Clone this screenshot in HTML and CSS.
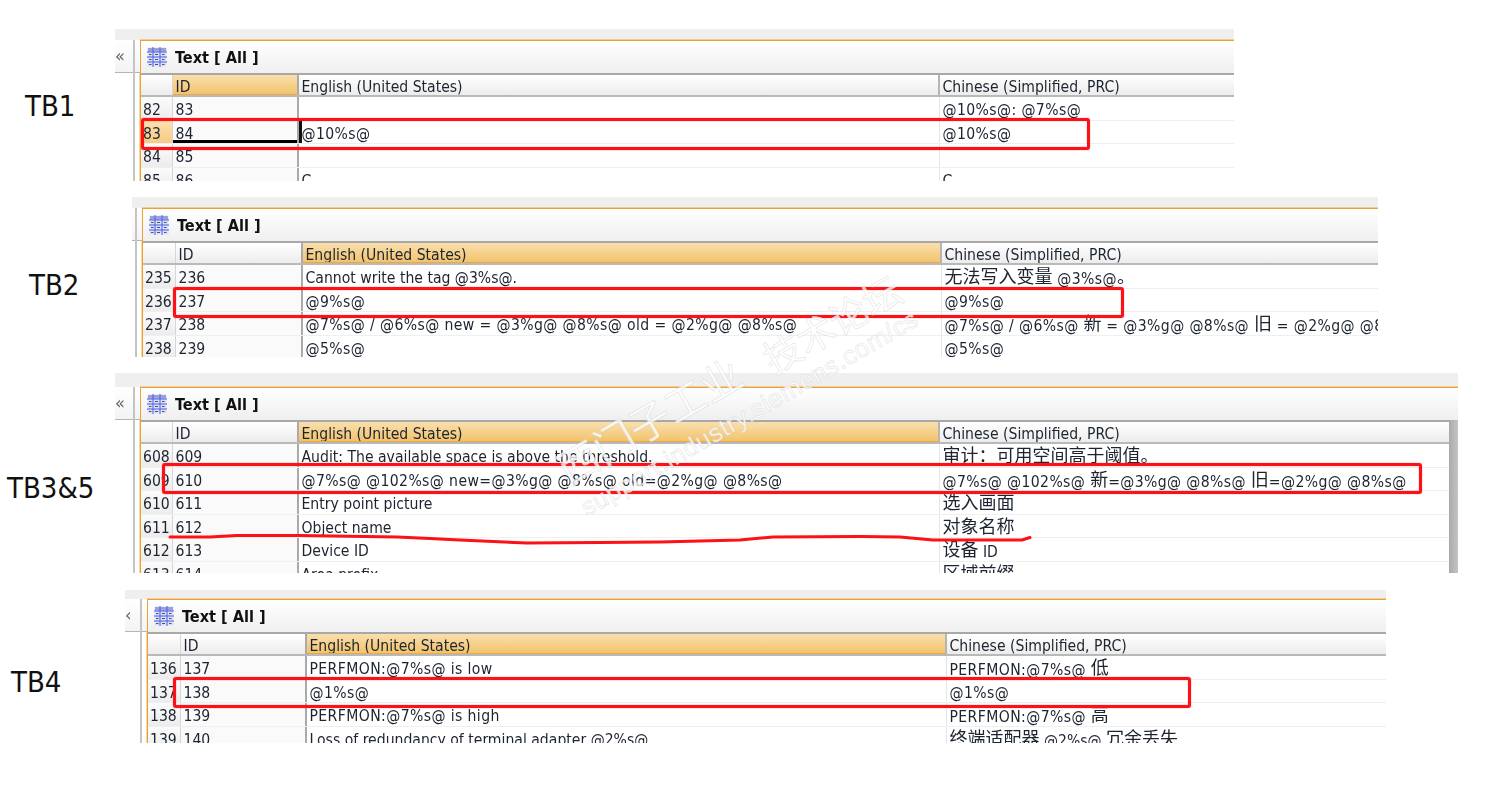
FILE: index.html
```html
<!DOCTYPE html>
<html lang="zh">
<head>
<meta charset="utf-8">
<title>Text [ All ]</title>
<link rel="stylesheet" href="styles.css">
</head>
<body>
<main class="canvas">
  <svg width="0" height="0" class="defs">
    <symbol id="grid-icon" viewBox="0 0 20 20">
      <rect x="0.5" y="0.5" width="19" height="19" fill="#dcdffa"/>
      <rect x="1" y="1" width="18" height="3.500" fill="#9ba1d6"/>
      <path d="M0 5h20M0 10h20M0 15h20M6 0v20M13 0v20" stroke="#4a5fe6" stroke-width="1" fill="none"/>
      <path d="M2 7.500h2.500M8 7.500h3M15 7.500h2.500M2 12.500h2.500M8 12.500h3M15 12.500h2.500M2 17.500h2.500M8 17.500h3M15 17.500h2.500" stroke="#555" stroke-width="1.200" fill="none"/>
    </symbol>
  </svg>

  <div class="label l1">TB1</div>
  <div class="label l2">TB2</div>
  <div class="label l3">TB3&amp;5</div>
  <div class="label l4">TB4</div>

  <section class="shot s1">
    <div class="side"><span class="chev">«</span></div>
    <div class="panel">
      <div class="titlebar"><svg class="icon"><use href="#grid-icon"/></svg><b>Text [ All ]</b></div>
      <div class="row head"><span class="c n"></span><span class="c id hot">ID</span><span class="c en">English (United States)</span><span class="c zh">Chinese (Simplified, PRC)</span></div>
      <div class="row"><span class="c n">82</span><span class="c id">83</span><span class="c en"></span><span class="c zh fmt">@10%s@: @7%s@</span></div>
      <div class="row"><span class="c n sel">83</span><span class="c id active">84</span><span class="c en caret fmt">@10%s@</span><span class="c zh fmt">@10%s@</span></div>
      <div class="row"><span class="c n">84</span><span class="c id">85</span><span class="c en"></span><span class="c zh"></span></div>
      <div class="row"><span class="c n">85</span><span class="c id">86</span><span class="c en">C</span><span class="c zh">C</span></div>
    </div>
  </section>

  <section class="shot s2">
    <div class="side"></div>
    <div class="panel">
      <div class="titlebar"><svg class="icon"><use href="#grid-icon"/></svg><b>Text [ All ]</b></div>
      <div class="row head"><span class="c n"></span><span class="c id">ID</span><span class="c en hot">English (United States)</span><span class="c zh">Chinese (Simplified, PRC)</span></div>
      <div class="row"><span class="c n">235</span><span class="c id">236</span><span class="c en">Cannot write the tag @3%s@.</span><span class="c zh fmt"><i>无法写入变量</i> @3%s@<i>。</i></span></div>
      <div class="row"><span class="c n">236</span><span class="c id">237</span><span class="c en fmt">@9%s@</span><span class="c zh fmt">@9%s@</span></div>
      <div class="row"><span class="c n">237</span><span class="c id">238</span><span class="c en fmt">@7%s@ / @6%s@ new = @3%g@ @8%s@ old = @2%g@ @8%s@</span><span class="c zh fmt">@7%s@ / @6%s@ <i>新</i> = @3%g@ @8%s@ <i>旧</i> = @2%g@ @8%s@</span></div>
      <div class="row"><span class="c n">238</span><span class="c id">239</span><span class="c en fmt">@5%s@</span><span class="c zh fmt">@5%s@</span></div>
    </div>
  </section>

  <section class="shot s3">
    <div class="side"><span class="chev">«</span></div>
    <div class="panel">
      <div class="titlebar"><svg class="icon"><use href="#grid-icon"/></svg><b>Text [ All ]</b></div>
      <div class="scrollwrap">
        <div class="rows">
          <div class="row head"><span class="c n"></span><span class="c id">ID</span><span class="c en hot">English (United States)</span><span class="c zh">Chinese (Simplified, PRC)</span></div>
          <div class="row"><span class="c n">608</span><span class="c id">609</span><span class="c en">Audit: The available space is above the threshold.</span><span class="c zh"><i>审计：可用空间高于阈值。</i></span></div>
          <div class="row"><span class="c n">609</span><span class="c id">610</span><span class="c en fmt">@7%s@ @102%s@ new=@3%g@ @8%s@ old=@2%g@ @8%s@</span><span class="c zh fmt">@7%s@ @102%s@ <i>新</i>=@3%g@ @8%s@ <i>旧</i>=@2%g@ @8%s@</span></div>
          <div class="row"><span class="c n">610</span><span class="c id">611</span><span class="c en">Entry point picture</span><span class="c zh"><i>选入画面</i></span></div>
          <div class="row"><span class="c n">611</span><span class="c id">612</span><span class="c en">Object name</span><span class="c zh"><i>对象名称</i></span></div>
          <div class="row"><span class="c n">612</span><span class="c id">613</span><span class="c en">Device ID</span><span class="c zh"><i>设备</i> ID</span></div>
          <div class="row"><span class="c n">613</span><span class="c id">614</span><span class="c en">Area prefix</span><span class="c zh"><i>区域前缀</i></span></div>
        </div>
        <div class="scrollbar"></div>
      </div>
    </div>
  </section>

  <section class="shot s4">
    <div class="side"><span class="chev">‹</span></div>
    <div class="panel">
      <div class="titlebar"><svg class="icon"><use href="#grid-icon"/></svg><b>Text [ All ]</b></div>
      <div class="row head"><span class="c n"></span><span class="c id">ID</span><span class="c en hot">English (United States)</span><span class="c zh">Chinese (Simplified, PRC)</span></div>
      <div class="row"><span class="c n">136</span><span class="c id">137</span><span class="c en fmt">PERFMON:@7%s@ is low</span><span class="c zh fmt">PERFMON:@7%s@ <i>低</i></span></div>
      <div class="row"><span class="c n">137</span><span class="c id">138</span><span class="c en fmt">@1%s@</span><span class="c zh fmt">@1%s@</span></div>
      <div class="row"><span class="c n">138</span><span class="c id">139</span><span class="c en fmt">PERFMON:@7%s@ is high</span><span class="c zh fmt">PERFMON:@7%s@ <i>高</i></span></div>
      <div class="row"><span class="c n">139</span><span class="c id">140</span><span class="c en">Loss of redundancy of terminal adapter @2%s@</span><span class="c zh"><i>终端适配器</i> @2%s@ <i>冗余丢失</i></span></div>
    </div>
  </section>

  <div class="redbox b1"></div>
  <div class="redbox b2"></div>
  <div class="redbox b3"></div>
  <div class="redbox b4"></div>
  <svg class="scribble" width="1487" height="798" viewBox="0 0 1487 798">
    <path d="M170 537 L210 537 L237 535.500 L300 535.500 L397 537 L430 538.500 L460 540 L527 543 L600 542.500 L660 542 L700 541 L740 540 L773 537 L860 536.500 L900 537 L933 540 L1000 540 L1022 540 L1030 537.500"/>
  </svg>

  <div class="mark m1">西门子工业</div>
  <div class="mark m2">技术论坛</div>
  <div class="mark m3">support.industry.siemens.com/cs</div>
</main>
</body>
</html>
```
FILE: styles.css
```css
* { box-sizing: border-box; }
html, body { margin: 0; padding: 0; background: #fff; }
.canvas { position: relative; width: 1487px; height: 798px; overflow: hidden; font-family: "DejaVu Sans", Tahoma, sans-serif; font-stretch: condensed; color: #1c2430; }
.defs { position: absolute; }

.label { position: absolute; font-size: 29px; line-height: 32px; color: #111; font-family: "DejaVu Sans", sans-serif; font-stretch: condensed; }
.l1 { left: 25px; top: 90px; }
.l2 { left: 29px; top: 269px; }
.l3 { left: 7px; top: 472px; }
.l4 { left: 11px; top: 666px; }

.shot { position: absolute; background: #fff; overflow: hidden; display: flex; align-items: stretch; background-image: linear-gradient(#efefef, #efefef); background-repeat: no-repeat; filter: blur(.3px); }
.s1 { left: 115px; top: 29px; width: 1119px; height: 152px; padding-top: 11px; background-size: 100% 11px; --side: 25px; --c: 32px 126px 641px 1fr; }
.s2 { left: 132px; top: 197px; width: 1246px; height: 160px; padding-top: 11px; background-size: 100% 11px; --side: 10px; --c: 33px 127px 639px 1fr; }
.s3 { left: 115px; top: 373px; width: 1343px; height: 200px; padding-top: 14px; background-size: 100% 14px; --side: 25px; --c: 32px 126px 641px 1fr; }
.s4 { left: 125px; top: 590px; width: 1261px; height: 153px; padding-top: 9px; background-size: 100% 9px; --side: 22px; --c: 33px 126px 640px 1fr; }

.side { flex: 0 0 var(--side); height: 33px; background: linear-gradient(#fff, #f3f3f3); border-bottom: 1px solid #b5b5b5; position: relative; color: #666; font-size: 18px; line-height: 32px; }
.side::after { content: ""; position: absolute; right: 5px; top: 0; height: 400px; width: 2px; background: #c4c4c4; }
.panel { flex: 1 1 auto; min-width: 0; border-top: 1px solid #f0a033; border-left: 1px solid #f0a033; box-shadow: 0 -1px 0 rgba(240,166,60,.45), -1px 0 0 rgba(240,166,60,.45); background: #fff; }
.titlebar { height: 32px; display: flex; align-items: center; gap: 8px; padding-left: 6px; background: linear-gradient(#fff, #efefef); }
.titlebar b { font-size: 16.200px; color: #111; white-space: nowrap; }
.icon { width: 20px; height: 20px; flex: none; }

.scrollwrap { display: flex; }
.rows { flex: 1 1 auto; min-width: 0; }
.scrollbar { flex: 0 0 9px; height: 160px; background: linear-gradient(90deg, #aaa, #c4c4c4); }

.row { display: grid; grid-template-columns: var(--c); height: 23.500px; font-size: 15.600px; line-height: 23px; border-bottom: 1px solid #efefef; }
.c { padding: 2px 0 0 2.500px; white-space: nowrap; overflow: hidden; }
.c i { display: inline-block; font-style: normal; font-size: 18px; font-family: "Noto Sans CJK SC", sans-serif; line-height: 18px; letter-spacing: 0; transform: translateY(-1.500px); }
.fmt { letter-spacing: .4px; }
.n { background: linear-gradient(#fbfbfb, #ececec); border-right: 1px solid #d6d6d6; padding-left: 2px; }
.id { background: #fafafa; border-right: 2px solid #aaa; }
.en { border-right: 1px solid #e6e6e6; }
.head { height: 24px; border-top: 2px solid #a8a8a8; border-bottom: 2px solid #b9b9b9; line-height: 21px; background: linear-gradient(#fff, #ececec); }
.head .c { background: linear-gradient(#fff, #ececec); }
.head .en { border-right: 2px solid #b5b5b5; }
.head .hot { background: linear-gradient(#f9dfae, #f2c36c); border-bottom: 1px solid #eda93f; }
.sel { background: linear-gradient(#fde0ae, #f7ca85); }
.active { box-shadow: inset 0 -3px 0 #000; }
.caret { box-shadow: inset 3px 0 0 #111; }

.mark { position: absolute; white-space: nowrap; transform: rotate(-30deg); transform-origin: left bottom; color: rgba(255,255,255,.8); -webkit-text-stroke: .7px rgba(205,205,205,.5); font-family: "Noto Sans CJK SC", sans-serif; }
.m1 { left: 572px; top: 442px; font-size: 41px; line-height: 50px; }
.m2 { left: 777px; top: 335px; font-size: 38px; line-height: 46px; }
.m3 { left: 590px; top: 492px; font-size: 25.500px; line-height: 30px; font-family: "Liberation Sans", sans-serif; font-stretch: normal; letter-spacing: .5px; }

.redbox { position: absolute; border: 3px solid #fb1116; border-radius: 3px; box-shadow: 0 0 1px #fb1116, inset 0 0 1px #fb1116; }
.b1 { left: 141px; top: 118px; width: 949px; height: 32px; }
.b2 { left: 173px; top: 287px; width: 951px; height: 31px; }
.b3 { left: 162px; top: 463px; width: 1260px; height: 31px; }
.b4 { left: 173px; top: 677px; width: 1018px; height: 31px; }
.scribble { position: absolute; left: 0; top: 0; pointer-events: none; }
.scribble path { fill: none; stroke: #fb1116; stroke-width: 3px; stroke-linecap: round; stroke-linejoin: round; }
```
